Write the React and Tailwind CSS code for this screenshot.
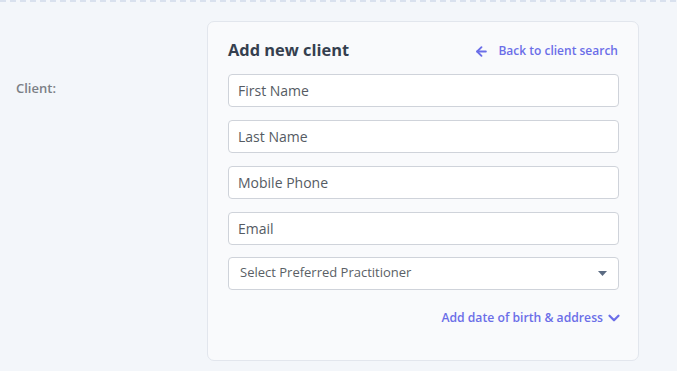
import { ArrowLeft, ChevronDown } from 'lucide-react'

const fields = ['First Name', 'Last Name', 'Mobile Phone', 'Email']

export default function App() {
  return (
    <div
      className="h-[371px] w-[677px] overflow-hidden bg-[#f3f6fa]"
      style={{ fontFamily: '"Open Sans", sans-serif' }}
    >
      <div className="h-[2px] bg-[repeating-linear-gradient(90deg,#d9e1ee_0px,#d9e1ee_6px,transparent_6px,transparent_10px)]" />
      <div className="flex pt-[19px]">
        <div className="w-[207px] shrink-0 pl-[16px] pt-[58px] text-[13px] font-semibold text-[#7b7f86]">
          Client:
        </div>
        <div className="h-[340px] w-[432px] rounded-[7px] border border-[#e2e6ed] bg-[#f9fafc] px-[20px] pt-[16px]">
          <div className="flex items-center justify-between">
            <h2 className="text-[16.4px] font-bold text-[#353f4f]">Add new client</h2>
            <button className="mt-[2px] flex items-center gap-[9px] text-[12px] font-semibold text-[#6b6ee8]">
              <ArrowLeft className="h-[15px] w-[15px]" strokeWidth={3} />
              Back to client search
            </button>
          </div>
          <div className="mt-[11px] flex flex-col gap-[13px]">
            {fields.map((f) => (
              <input
                key={f}
                placeholder={f}
                className="h-[33px] w-[391px] rounded-[4px] border border-[#cfd3da] bg-white px-[9px] text-[14px] text-[#444] placeholder:text-[#555b63] outline-none"
              />
            ))}
            <div className="-mt-[1px] flex h-[33px] w-[391px] items-center justify-between rounded-[4px] border border-[#cfd3da] bg-white pl-[11px] pr-[11px]">
              <span className="text-[13px] text-[#5a5f66]">Select Preferred Practitioner</span>
              <svg width="9" height="5" viewBox="0 0 9 5">
                <path d="M0 0 L9 0 L4.5 5 Z" fill="#5b6b82" />
              </svg>
            </div>
          </div>
          <div className="mt-[19px] flex w-[391px] items-center justify-end gap-[2px] text-[12.2px] font-semibold text-[#6b6ee8]">
            Add date of birth &amp; address
            <ChevronDown className="-mr-[4px] h-[18px] w-[18px]" strokeWidth={3} />
          </div>
        </div>
      </div>
    </div>
  )
}
